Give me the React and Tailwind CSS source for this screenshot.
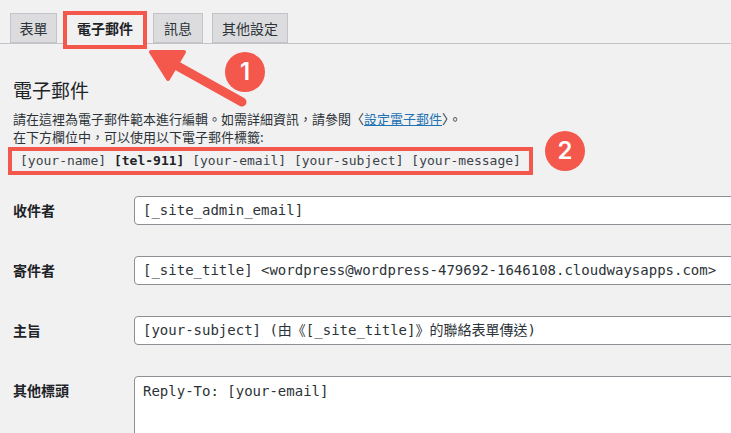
import React from "react";

const mono = "font-['DejaVu_Sans_Mono','Noto_Sans_CJK_TC',monospace]";

function Tab({ label, active, w }) {
  if (active) {
    return (
      <div className={`relative ${w} h-[31px] -mb-px border border-[#c3c4c7] border-b-[#f1f1f1] bg-[#f1f1f1] flex items-center justify-center text-[14px] font-bold`}>
        {label}
        {/* annotation box */}
        <div className="absolute -left-[4px] -top-[3px] w-[84px] h-[38px] border-4 border-[#f4574c]"></div>
      </div>
    );
  }
  return (
    <div className={`${w} h-[30px] border border-[#c3c4c7] bg-[#dcdcde] flex items-center justify-center text-[14px] text-[#2c3338]`}>
      {label}
    </div>
  );
}

function Row({ label, value }) {
  return (
    <div className="flex items-start">
      <div className="w-[121px] shrink-0 text-[14px] font-bold leading-[29px]">{label}</div>
      <div className={`w-[620px] shrink-0 h-[29px] border border-[#8c8f94] rounded-[4px] bg-white px-[8px] text-[14px] leading-[27px] text-[#2c3338] whitespace-nowrap overflow-hidden ${mono}`}>
        {value}
      </div>
    </div>
  );
}

export default function App() {
  return (
    <div className="relative w-[731px] h-[433px] overflow-hidden bg-[#f1f1f1] text-[#1d2327] font-['Noto_Sans_CJK_TC',sans-serif]">
      {/* Tabs */}
      <div className="flex items-start gap-[9px] pl-[10px] pt-[13px] h-[44px] border-b border-[#c3c4c7]">
        <Tab label="表單" w="w-[47px]" />
        <Tab label="電子郵件" w="w-[78px]" active />
        <Tab label="訊息" w="w-[50px]" />
        <Tab label="其他設定" w="w-[76px]" />
      </div>

      <h2 className="mt-[34px] px-[13px] text-[19px] leading-[24px] font-normal">電子郵件</h2>

      <div className="mt-[8px] px-[13px] text-[13px] leading-[18px] text-[#2c3338]">
        <p>
          請在這裡為電子郵件範本進行編輯。如需詳細資訊，請參閱〈<a href="#" className="text-[#2271b1] underline">設定電子郵件</a>〉。
        </p>
        <p>在下方欄位中，可以使用以下電子郵件標籤:</p>
      </div>

      <div className="pl-[8px]">
        <div className={`inline-block h-[28px] border-4 border-[#f4574c] px-[8px] text-[13px] leading-[20px] text-[#3c434a] whitespace-nowrap ${mono}`}>
          [your-name] <span className="font-semibold text-[#1d2327]">[tel-911]</span> [your-email] [your-subject] [your-message]
        </div>
      </div>

      {/* Form */}
      <div className="mt-[21px] pl-[13px] flex flex-col gap-[31px]">
        <Row label="收件者" value="[_site_admin_email]" />
        <Row label="寄件者" value="[_site_title] <wordpress@wordpress-479692-1646108.cloudwaysapps.com>" />
        <Row label="主旨" value="[your-subject] (由《[_site_title]》的聯絡表單傳送)" />
        <div className="flex items-start">
          <div className="w-[121px] shrink-0 text-[14px] font-bold leading-[29px]">其他標頭</div>
          <div className={`w-[620px] shrink-0 h-[90px] border border-[#8c8f94] rounded-[4px] bg-white px-[8px] pt-[1px] text-[14px] leading-[27px] text-[#2c3338] whitespace-pre ${mono}`}>
            Reply-To: [your-email]
          </div>
        </div>
      </div>

      {/* Annotations */}
      <svg className="absolute left-0 top-0 pointer-events-none" width="731" height="433" viewBox="0 0 731 433">
        <line x1="242" y1="102" x2="172" y2="63" stroke="#f4574c" strokeWidth="9" strokeLinecap="round" />
        <polygon points="151,52 184,52 168,79" fill="#f4574c" stroke="#f4574c" strokeWidth="4" strokeLinejoin="round" />
      </svg>
      <div className="absolute left-[225px] top-[52px] w-[40px] h-[40px] rounded-full bg-[#f4574c] text-white text-[24px] font-semibold leading-none flex items-center justify-center font-['Inter',sans-serif]">
        1
      </div>
      <div className="absolute left-[545px] top-[131px] w-[40px] h-[40px] rounded-full bg-[#f4574c] text-white text-[24px] font-semibold leading-none flex items-center justify-center font-['Inter',sans-serif]">
        2
      </div>
    </div>
  );
}
